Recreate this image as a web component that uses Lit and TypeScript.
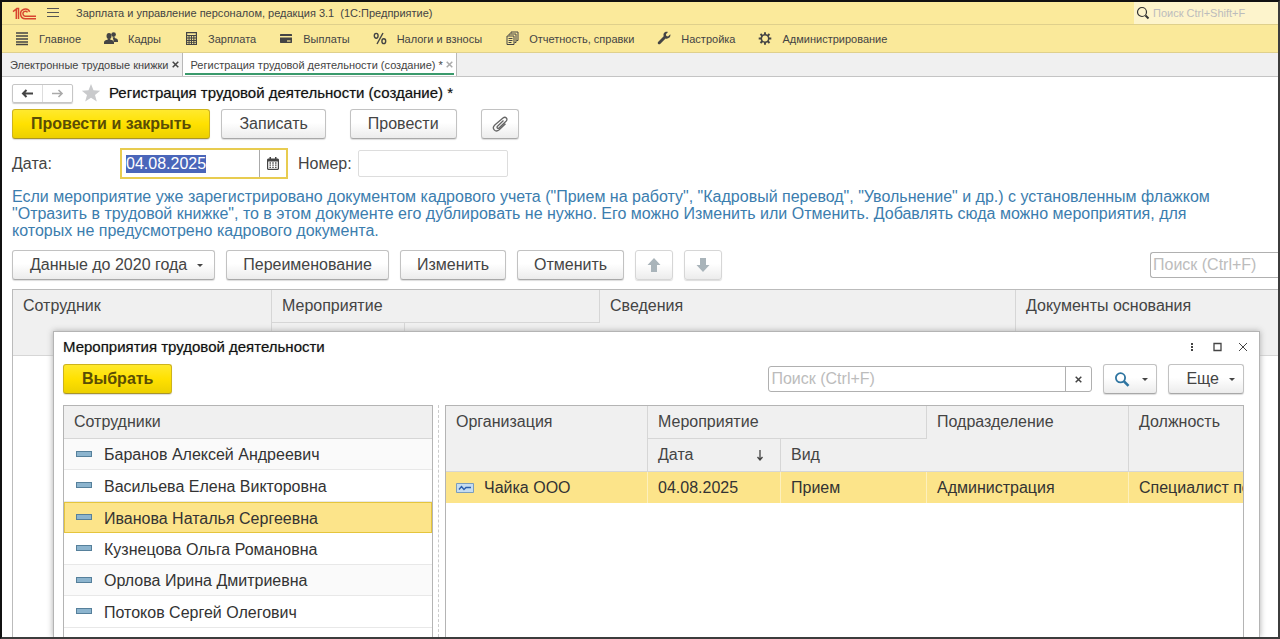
import { LitElement, html, css, svg } from "lit";
import { customElement, state } from "lit/decorators.js";
import { classMap } from "lit/directives/class-map.js";

const icons: Record<string, unknown> = {
  main: svg`<path d="M1 2h12M1 5h12M1 8h12M1 11h12M1 13.5h12" stroke="currentColor" stroke-width="1.4"/>`,
  staff: svg`<g fill="currentColor"><circle cx="9.6" cy="3.6" r="2.3"/><path d="M8.6 6.2h2.2l.4 1.1c1.6.4 2.8 1 2.8 2.6V11H10z"/><ellipse cx="5" cy="5" rx="2.5" ry="3"/><path d="M0 13v-1.600c0-1.800 1.700-2.300 3.700-2.700V7.500h2.600v1.200c2 .4 3.700.9 3.700 2.700V13z"/></g>`,
  salary: svg`<path fill="currentColor" fill-rule="evenodd" d="M2 1h11v13H2zM3.200 2.200v1.700h8.600V2.200zM3.200 5v1.500h1.300V5zm2.400 0v1.500h1.300V5zM8 5v1.500h1.300V5zm2.400 0v1.500h1.400V5zM3.200 7.500V9h1.300V7.500zm2.400 0V9h1.300V7.500zM8 7.500V9h1.300V7.500zm2.400 0V9h1.400V7.500zM3.200 10v1.200h1.300V10zm2.400 0v1.200h1.300V10zM8 10v1.200h1.300V10zm2.400 0v1.200h1.400V10zM3.200 12v1h1.300v-1zm2.400 0v1h1.300v-1zM8 12v1h1.300v-1zm2.400 0v1h1.400v-1z"/>`,
  pay: svg`<path fill="currentColor" d="M1.500 3h11l.5.500V5H1V3.500zM1 6.500h12v5l-.5.500h-11L1 11.500z"/><path d="M8 10h3.500" stroke="#fae99a" stroke-width="1.200"/>`,
  tax: svg`<g fill="none" stroke="currentColor" stroke-width="1.400"><ellipse cx="3.200" cy="4.800" rx="1.900" ry="2.400"/><ellipse cx="10.800" cy="10.200" rx="1.900" ry="2.400"/><path d="M10 2 4 13"/></g>`,
  report: svg`<g fill="none" stroke="currentColor"><path d="M2 5h7v8.500H2z"/><path d="M4 4.500V3h7v8.500H9.500M6 2.500V1h7v8.500h-1.500"/><path d="M3.500 7.500h4M3.500 9.500h4M3.500 11.500h3"/></g>`,
  tools: svg`<path fill="currentColor" d="M13.300 3.200 11 5.400 9.300 4.900 8.900 3.300 11 1C9.200.4 7.400 1 6.700 2.600c-.4.900-.3 1.700 0 2.600L1.300 10.700c-.7.700-.7 1.600-.1 2.200s1.500.6 2.200-.1L8.600 7.500c1.200.4 2.700.2 3.800-.9.900-.9 1.200-2.200.9-3.400z"/>`,
  admin: svg`<circle cx="7" cy="7.500" r="3.700" fill="none" stroke="currentColor" stroke-width="1.500"/><g stroke="currentColor" stroke-width="1.900"><path d="M7 1.200V4M7 11v2.800M.7 7.500h2.800M10.500 7.500h2.800M2.500 3l2 2M9.500 10l2 2M2.500 12l2-2M9.500 5l2-2"/></g>`,
};

const icon = (name: string) =>
  html`<svg width="14" height="15" viewBox="0 0 14 15" aria-hidden="true">${icons[name]}</svg>`;

@customElement("app-root")
export class AppRoot extends LitElement {
  @state() private selected = 2;

  private sections = [
    ["main", "Главное"],
    ["staff", "Кадры"],
    ["salary", "Зарплата"],
    ["pay", "Выплаты"],
    ["tax", "Налоги и взносы"],
    ["report", "Отчетность, справки"],
    ["tools", "Настройка"],
    ["admin", "Администрирование"],
  ];

  private people = [
    "Баранов Алексей Андреевич",
    "Васильева Елена Викторовна",
    "Иванова Наталья Сергеевна",
    "Кузнецова Ольга Романовна",
    "Орлова Ирина Дмитриевна",
    "Потоков Сергей Олегович",
  ];

  static styles = css`
    :host {
      display: flex;
      flex-direction: column;
      box-sizing: border-box;
      height: 100vh;
      overflow: hidden;
      border: 2px solid #3c3c3c;
      border-left-color: #111;
      border-top-color: #111;
      background: #fff;
      color: #444;
      font: 16px/18px "Liberation Sans", Arial, sans-serif;
    }
    *, *::before, *::after { box-sizing: border-box; }
    button, input { font: inherit; color: inherit; margin: 0; }
    button { padding: 0; border: 0; background: none; white-space: nowrap; }
    svg { display: block; flex: none; }
    input::placeholder { color: #bcbcbc; opacity: 1; }
    input { min-width: 0; outline: 0; }

    .titlebar {
      display: flex;
      align-items: center;
      flex: none;
      height: 23px;
      padding-left: 10px;
      background: #fbea9b;
      border-bottom: 1px solid #dfd08c;
      font-size: 11px;
      line-height: 14px;
    }
    .burger { margin: 0 16px 0 10px; }
    .find {
      display: flex;
      align-items: center;
      gap: 3px;
      width: 144px;
      height: 22px;
      margin-left: auto;
      padding-left: 2px;
      background: #fdf4cc;
    }
    .find input { flex: 1; border: 0; padding: 0; background: none; }
    .sections {
      display: flex;
      align-items: center;
      flex: none;
      gap: 23px;
      height: 28px;
      padding-left: 13px;
      background: #fae99a;
      border-bottom: 1px solid #dfd08c;
      font-size: 11px;
      line-height: 14px;
    }
    .sections button { display: flex; align-items: center; gap: 10px; }
    .tabs {
      display: flex;
      flex: none;
      height: 24px;
      background: #f0f0f0;
      border-bottom: 1px solid #c4c4c4;
      font-size: 11px;
      line-height: 14px;
    }
    .tab {
      display: flex;
      align-items: center;
      gap: 3px;
      padding: 0 3px 0 8px;
      border-right: 1px solid #b8b8b8;
    }
    .tab.active { position: relative; background: #fff; }
    .tab.active::after {
      content: "";
      position: absolute;
      left: 2px;
      right: 2px;
      bottom: 1px;
      height: 2px;
      background: #3a9a6c;
    }
    .tab.active .x { color: #aaa; }

    .page {
      display: flex;
      flex-direction: column;
      flex: 1;
      min-height: 0;
      padding: 6px 0 0 10px;
    }
    .row { display: flex; align-items: center; flex: none; }
    .heading { gap: 8px; height: 20px; }
    .history {
      display: flex;
      border: 1px solid #c6c6c6;
      border-radius: 2px;
      box-shadow: 0 1px 1px #ccc;
    }
    .history button { display: grid; place-items: center; width: 29px; height: 17px; }
    .history button + button { width: 30px; border-left: 1px solid #ddd; }
    h1, h2 { margin: 0; color: #111; font-size: 15px; font-weight: 400; line-height: 18px; text-shadow: 0 0 1px #999; }

    .btn {
      display: inline-flex;
      align-items: center;
      justify-content: center;
      height: 30px;
      padding: 0 17px;
      border: 1px solid #c2c2c2;
      border-bottom-color: #a8a8a8;
      border-radius: 3px;
      background: linear-gradient(#fff 45%, #ececec);
      box-shadow: 0 1px 1px #ddd;
    }
    .btn.primary {
      padding: 0 18px;
      border-color: #cdb31d;
      border-bottom-color: #a8942b;
      background: linear-gradient(#ffe92e, #ffe100 50%, #ecd000);
      color: #5a4d05;
      font-weight: 700;
    }
    .btn.square { width: 38px; padding: 0; }
    .btn.soft { border-color: #d6d6d6; }
    .btn .caret { margin-left: 10px; }
    .caret { border: 3px solid transparent; border-top-color: #444; border-bottom: 0; }
    .commands { gap: 11px; margin-top: 6px; }
    .commands .wide { margin-left: 13px; }

    .fields { margin-top: 9px; height: 31px; }
    .fields .date-label { width: 108px; }
    .date {
      display: flex;
      width: 168px;
      height: 31px;
      margin-right: 10px;
      border: 2px solid #e8cc50;
      background: #fff;
    }
    .date input { flex: 1; border: 0; padding: 0 4px; height: 27px; }
    .date input::selection { background: #4a66ba; color: #fff; }
    .date button { display: grid; place-items: center; width: 27px; border-left: 1px solid #aaa; }
    .number { width: 150px; height: 27px; margin-left: 6px; border: 1px solid #ddd; border-radius: 2px; }
    .hint { margin: 9px 40px 0 0; color: #3b7dae; line-height: 17px; }
    .toolbar { gap: 11px; margin-top: 11px; }
    .toolbar .btn { padding: 0 16px; }
    .toolbar .btn.menu { padding: 0 11px 0 17px; }
    .toolbar .btn.square { padding: 0; }
    .search { height: 26px; border: 1px solid #b0b0b0; border-radius: 3px; padding: 0 2px; background: #fff; }
    .toolbar .search {
      width: 128px;
      margin-left: auto;
      border-right: 0;
      border-radius: 3px 0 0 3px;
    }

    .area { position: relative; flex: 1; min-height: 0; margin-top: 9px; border: 1px solid #bbb; border-width: 1px 0 0 1px; }
    table { width: 100%; border-collapse: separate; border-spacing: 0; table-layout: fixed; }
    th, td { padding: 0 10px; text-align: left; white-space: nowrap; overflow: hidden; }
    th {
      height: 33px;
      background: #f0f0f0;
      font-weight: 400;
      vertical-align: top;
      padding-top: 7px;
      border-right: 1px solid #d6d6d6;
      border-bottom: 1px solid #d6d6d6;
    }
    th:last-child { border-right: 0; }
    .c-emp { width: 259px; }
    .c-date { width: 133px; }
    .c-kind { width: 195px; }
    .c-info { width: 416px; }

    .dialog {
      position: absolute;
      inset: 41px 18px 0 40px;
      display: flex;
      flex-direction: column;
      padding: 5px 15px 0 9px;
      border: 1px solid #b4b4b4;
      border-bottom: 0;
      background: #fff;
      box-shadow: 0 0 6px #aaa;
    }
    .caption { justify-content: space-between; height: 20px; }
    .window { display: flex; gap: 16px; margin-right: -4px; }
    .actions { gap: 11px; margin-top: 7px; }
    .actions .combo { display: flex; width: 324px; margin-left: auto; padding: 0; }
    .combo input { flex: 1; border: 0; padding: 0 2px; background: none; }
    .combo button { display: grid; place-items: center; width: 26px; border-left: 1px solid #b0b0b0; }
    .btn.lens { padding: 0 8px 0 10px; }
    .btn.lens .caret { margin-left: 12px; }
    .btn.more { padding: 0 8px 0 17px; }

    .panes { display: flex; flex: 1; min-height: 0; margin-top: 11px; }
    .pane { border: 1px solid #b4b4b4; border-bottom: 0; overflow: hidden; }
    .left { width: 370px; flex: none; }
    .right { flex: 1; min-width: 0; }
    .split { width: 12px; flex: none; padding-left: 5px; }
    .split::before { content: ""; display: block; height: 100%; border-left: 1px dashed #ccc; }
    .people td { height: 32px; padding-top: 2px; border-bottom: 1px solid #e8e8e8; color: #333; }
    .people tr:nth-child(odd) td { height: 31px; background: #fafafa; }
    .people tr.on td { background: #fce48a; border: 1px solid #e5c53c; padding-left: 9px; }
    .person, .org { display: flex; align-items: center; gap: 12px; }
    .mark { flex: none; width: 16px; height: 6px; margin-left: 2px; margin-bottom: 3px; border: 1px solid #56809b; background: #8cb4ce; }
    .org { gap: 10px; }
    .events td { height: 31px; background: #fce48a; border-right: 1px solid #fdf0bd; color: #333; }
    .events td:last-child { border-right: 0; padding-right: 0; text-overflow: clip; }
    .sort { display: flex; justify-content: space-between; }
    .o-org { width: 202px; }
    .o-kind { width: 146px; }
  `;

  firstUpdated() {
    const input = this.renderRoot.querySelector<HTMLInputElement>("#date")!;
    input.focus();
    input.select();
  }

  render() {
    return html`
      <header class="titlebar">
        <svg width="24" height="13" viewBox="0 0 24 13" fill="none" stroke="#d8452f" stroke-width="1.500" aria-label="1С">
          <path d="M1 4.600 4.300 2v10M6.500 12V1.500H4.500"/>
          <path d="M17.700 4.800A4.800 4.800 0 1 0 13.300 11.700H24"/>
          <path d="M15.500 5.300A2.500 2.500 0 1 0 13.300 9.200H24"/>
        </svg>
        <svg class="burger" width="14" height="12" viewBox="0 0 14 12" stroke="#555"><path d="M1 1.500h12M1 5.500h12M1 9.500h12"/></svg>
        <span>Зарплата и управление персоналом, редакция 3.1&nbsp; (1С:Предприятие)</span>
        <label class="find">
          <svg width="14" height="14" viewBox="0 0 14 14" fill="none" stroke="#333"><circle cx="6" cy="6" r="4.500" stroke-width="1.200"/><path d="m9.500 9.500 3 3" stroke-width="2"/></svg>
          <input aria-label="Поиск" placeholder="Поиск Ctrl+Shift+F" />
        </label>
      </header>
      <nav class="sections">
        ${this.sections.map(([id, label]) => html`<button>${icon(id)}${label}</button>`)}
      </nav>
      <div class="tabs">
        <div class="tab">Электронные трудовые книжки <button class="x" aria-label="Закрыть">${this.cross(7)}</button></div>
        <div class="tab active">Регистрация трудовой деятельности (создание) * <button class="x" aria-label="Закрыть">${this.cross(7)}</button></div>
      </div>
      <main class="page">
        <div class="row heading">
          <div class="history">
            <button aria-label="Назад"><svg width="13" height="9" viewBox="0 0 13 9" fill="none" stroke="#444" stroke-width="2"><path d="M12 4.500H2M5.500 1 2 4.500 5.500 8"/></svg></button>
            <button aria-label="Вперед"><svg width="13" height="9" viewBox="0 0 13 9" fill="none" stroke="#aaa" stroke-width="1.600"><path d="M1 4.500h10M7.500 1 11 4.500 7.500 8"/></svg></button>
          </div>
          <svg width="20" height="18" viewBox="0 0 20 18"><path fill="#c9cacc" d="m10 0 2.500 6.300 6.700.4-5.200 4.200 1.800 6.600-5.800-3.700-5.800 3.700L6 10.900.8 6.700l6.700-.4z"/></svg>
          <h1>Регистрация трудовой деятельности (создание) *</h1>
        </div>
        <div class="row commands">
          <button class="btn primary">Провести и закрыть</button>
          <button class="btn">Записать</button>
          <button class="btn wide">Провести</button>
          <button class="btn square wide" aria-label="Файлы">
            <svg width="18" height="18" viewBox="0 0 18 18" fill="none" stroke="#666" stroke-width="1.300"><path d="m12.500 5.500-6 5.800c-1.200 1.200.3 2.700 1.500 1.600l7-6.600c2.500-2.500-.6-5.300-3-3.200L3.800 10c-3.600 3.500.6 8 4.400 4.700l6.300-5.900"/></svg>
          </button>
        </div>
        <div class="row fields">
          <label class="date-label" for="date">Дата:</label>
          <div class="date">
            <input id="date" value="04.08.2025" />
            <button aria-label="Календарь">
              <svg width="12" height="13" viewBox="0 0 12 13"><path fill="#444" fill-rule="evenodd" d="M2.500 0h1.500v1.500h4V0h1.500v1.500H11l1 1V12l-1 1H1l-1-1V2.500l1-1h1.500zM1.200 4.500v7.300h9.600V4.500z"/><path d="M2.500 6h7M2.500 8.200h7M2.500 10.400h7" stroke="#444" stroke-width="1.300" stroke-dasharray="1.400"/></svg>
            </button>
          </div>
          <label for="number">Номер:</label>
          <input class="number" id="number" />
        </div>
        <p class="hint">
          Если мероприятие уже зарегистрировано документом кадрового учета ("Прием на работу", "Кадровый перевод", "Увольнение" и др.) с установленным флажком "Отразить в трудовой книжке", то в этом документе его дублировать не нужно. Его можно Изменить или Отменить. Добавлять сюда можно мероприятия, для которых не предусмотрено кадрового документа.
        </p>
        <div class="row toolbar">
          <button class="btn menu">Данные до 2020 года<span class="caret"></span></button>
          <button class="btn">Переименование</button>
          <button class="btn">Изменить</button>
          <button class="btn">Отменить</button>
          <button class="btn square soft" aria-label="Вверх">${this.arrow("M7 0l6.500 7H10v7H4V7H.5z")}</button>
          <button class="btn square soft" aria-label="Вниз">${this.arrow("M7 14 .5 7H4V0h6v7h3.500z")}</button>
          <input class="search" aria-label="Поиск" placeholder="Поиск (Ctrl+F)" />
        </div>
        <div class="area">
          <table>
            <colgroup><col class="c-emp" /><col class="c-date" /><col class="c-kind" /><col class="c-info" /><col /></colgroup>
            <thead>
              <tr><th rowspan="2">Сотрудник</th><th colspan="2">Мероприятие</th><th rowspan="2">Сведения</th><th rowspan="2">Документы основания</th></tr>
              <tr><th></th><th></th></tr>
            </thead>
          </table>
          ${this.dialog()}
        </div>
      </main>
    `;
  }

  private dialog() {
    return html`
      <section class="dialog" role="dialog" aria-labelledby="dialog-title">
        <div class="row caption">
          <h2 id="dialog-title">Мероприятия трудовой деятельности</h2>
          <div class="window">
            <button aria-label="Меню"><svg width="10" height="10" viewBox="0 0 10 10" fill="#444"><path d="M4 1h2v2H4zM4 4h2v2H4zM4 7h2v2H4z"/></svg></button>
            <button aria-label="Развернуть"><svg width="9" height="10" viewBox="0 0 9 10" fill="none" stroke="#444" stroke-width="1.300"><path d="M1 1.500h7v7H1z"/></svg></button>
            <button aria-label="Закрыть"><svg width="10" height="10" viewBox="0 0 10 10" stroke="#444"><path d="m1 1 8 8M9 1 1 9"/></svg></button>
          </div>
        </div>
        <div class="row actions">
          <button class="btn primary">Выбрать</button>
          <div class="search combo">
            <input aria-label="Поиск" placeholder="Поиск (Ctrl+F)" />
            <button aria-label="Очистить">${this.cross(7)}</button>
          </div>
          <button class="btn lens" aria-label="Найти">
            <svg width="16" height="15" viewBox="0 0 16 15" fill="none" stroke="#2d74a0"><circle cx="6.500" cy="5.800" r="4.600" stroke-width="1.800"/><path d="m10 9.300 4.500 4.500" stroke-width="2.600"/></svg>
            <span class="caret"></span>
          </button>
          <button class="btn more">Еще<span class="caret"></span></button>
        </div>
        <div class="panes">
          <div class="pane left">
            <table class="people">
              <thead><tr><th>Сотрудники</th></tr></thead>
              <tbody>
                ${this.people.map(
                  (name, i) => html`<tr class=${classMap({ on: i === this.selected })} @click=${() => (this.selected = i)}>
                    <td><div class="person"><span class="mark"></span>${name}</div></td>
                  </tr>`
                )}
              </tbody>
            </table>
          </div>
          <div class="split"></div>
          <div class="pane right">
            <table class="events">
              <colgroup><col class="o-org" /><col class="c-date" /><col class="o-kind" /><col class="o-org" /><col /></colgroup>
              <thead>
                <tr><th rowspan="2">Организация</th><th colspan="2">Мероприятие</th><th rowspan="2">Подразделение</th><th rowspan="2">Должность</th></tr>
                <tr>
                  <th><div class="sort">Дата <svg width="20" height="18" viewBox="0 0 20 18" fill="none" stroke="#444"><path d="M10 4v10M7.500 11l2.500 3 2.500-3" stroke-width="1.300"/></svg></div></th>
                  <th>Вид</th>
                </tr>
              </thead>
              <tbody>
                <tr>
                  <td><div class="org"><svg width="18" height="10" viewBox="0 0 18 10" fill="none"><path d="M.5.5h17v9H.5z" fill="#c5dcf0" stroke="#7a9dbd"/><path d="M3 6.500 5.500 3.500l2.500 3 2-2h5" stroke="#2b5fae" stroke-width="1.400"/></svg>Чайка ООО</div></td>
                  <td>04.08.2025</td>
                  <td>Прием</td>
                  <td>Администрация</td>
                  <td>Специалист по</td>
                </tr>
              </tbody>
            </table>
          </div>
        </div>
      </section>
    `;
  }

  private cross(size: number) {
    return html`<svg width=${size} height=${size} viewBox="0 0 7 7" stroke="currentColor" stroke-width="1.500"><path d="m.7.7 5.600 5.600M6.300.7.7 6.300" /></svg>`;
  }

  private arrow(d: string) {
    return html`<svg width="14" height="14" viewBox="0 0 14 14" fill="#a9b4ba"><path d=${d} /></svg>`;
  }
}
